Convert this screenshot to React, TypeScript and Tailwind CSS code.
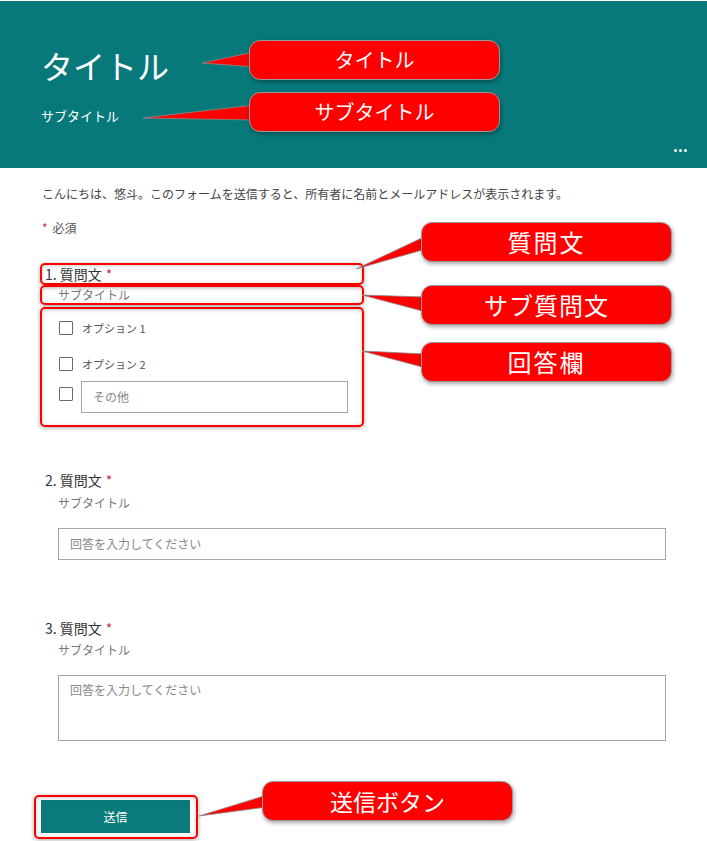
import React from "react";

const JP = "font-['Noto_Sans_CJK_JP',sans-serif]";

type Pointer = { tip: [number, number]; base: [number, number, number] };

const pointers: Pointer[] = [
  { tip: [202, 63], base: [254, 52, 67] },
  { tip: [143, 118], base: [254, 105, 120] },
  { tip: [356, 269], base: [426, 236, 249] },
  { tip: [362, 295], base: [426, 297, 312] },
  { tip: [362, 351], base: [426, 354, 368] },
  { tip: [199, 816], base: [267, 795, 807] },
];

const callouts = [
  { text: "タイトル", cls: "left-[249px] top-[40px] text-[20px]" },
  { text: "サブタイトル", cls: "left-[249px] top-[92px] text-[20px]" },
  { text: "質問文", cls: "left-[421px] top-[222px] text-[24px] tracking-[2px]" },
  { text: "サブ質問文", cls: "left-[421px] top-[285px] text-[24px] tracking-[1px]" },
  { text: "回答欄", cls: "left-[421px] top-[342px] text-[24px] tracking-[2px]" },
  { text: "送信ボタン", cls: "left-[262px] top-[781px] text-[23px]" },
];

function Mark({ className }: { className: string }) {
  // red annotation frame drawn over a block
  return (
    <div
      className={`pointer-events-none absolute rounded-[5px] border-2 border-[#ff0000] shadow-[0_1px_4px_rgba(0,0,0,0.35),inset_0_1px_4px_rgba(0,0,0,0.2)] ${className}`}
    />
  );
}

function Box() {
  return <span className="h-[14px] w-[14px] shrink-0 rounded-[1px] border border-[#6b6b6b] bg-white" />;
}

function Required() {
  return <span className="ml-[4px] text-[#c4314b]">*</span>;
}

function Question({ n }: { n: number }) {
  return (
    <div className="pl-[3px] text-[14px] leading-[20px] text-[#333]">
      {n}. 質問文
      <Required />
    </div>
  );
}

export default function App() {
  return (
    <div className={`relative h-[841px] w-full overflow-hidden bg-white ${JP}`}>
      <div className="pt-px">
        <header className="flex h-[167px] flex-col bg-[#07797a] pl-[41px] pt-[46px] text-white">
          <h1 className="text-[32px] font-normal leading-[36px]">タイトル</h1>
          <div className="mt-[23px] text-[13px] leading-[20px]">サブタイトル</div>
          <div className="mt-[23px] flex justify-end gap-[2px] pr-[20px]">
            <span className="h-[3px] w-[3px] rounded-full bg-white" />
            <span className="h-[3px] w-[3px] rounded-full bg-white" />
            <span className="h-[3px] w-[3px] rounded-full bg-white" />
          </div>
        </header>
      </div>

      <main className="px-[42px] pt-[17px] text-[#333]">
        <p className="text-[12px] leading-[18px] text-[#444]">
          こんにちは、悠斗。このフォームを送信すると、所有者に名前とメールアドレスが表示されます。
        </p>
        <div className="mt-[16px] text-[12px] leading-[18px] text-[#555]">
          <span className="mr-[5px] text-[#c4314b]">*</span>必須
        </div>

        <div className="relative ml-[-2px] mt-[26px] flex h-[22px] w-[324px] items-center pl-[2px]">
          <Question n={1} />
          <Mark className="inset-0" />
        </div>
        <div className="relative ml-[-2px] flex h-[20px] w-[324px] items-center pl-[18px] text-[12px] text-[#777]">
          サブタイトル
          <Mark className="inset-0" />
        </div>
        <div className="relative ml-[-2px] mt-[2px] h-[120px] w-[324px] pl-[19px] pt-[14px] text-[11px] text-[#555]">
          <div className="flex h-[14px] items-center">
            <Box />
            <span className="ml-[9px]">オプション 1</span>
          </div>
          <div className="mt-[22px] flex h-[14px] items-center">
            <Box />
            <span className="ml-[9px]">オプション 2</span>
          </div>
          <div className="mt-[10px] flex items-start">
            <span className="mt-[6px] flex">
              <Box />
            </span>
            <div className="ml-[8px] flex h-[32px] w-[267px] items-center border border-[#a6a6a6] pl-[11px] text-[12px] text-[#888]">
              その他
            </div>
          </div>
          <Mark className="inset-0" />
        </div>

        <div className="mt-[43px]">
          <Question n={2} />
        </div>
        <div className="mt-[4px] pl-[16px] text-[12px] leading-[18px] text-[#777]">サブタイトル</div>
        <div className="ml-[16px] mt-[16px] flex h-[32px] w-[608px] items-center border border-[#a6a6a6] pl-[11px] text-[12px] text-[#888]">
          回答を入力してください
        </div>

        <div className="mt-[58px]">
          <Question n={3} />
        </div>
        <div className="mt-[3px] pl-[16px] text-[12px] leading-[18px] text-[#777]">サブタイトル</div>
        <div className="ml-[16px] mt-[16px] h-[66px] w-[608px] border border-[#a6a6a6] pl-[11px] pt-[5px] text-[12px] leading-[18px] text-[#888]">
          回答を入力してください
        </div>

        <div className="relative ml-[-1px] mt-[59px] w-[149px]">
          <button className="flex h-[33px] w-[149px] items-center justify-center bg-[#0b7a7a] text-[12px] text-white">
            送信
          </button>
          <Mark className="-bottom-[6px] -left-[7px] -right-[8px] -top-[5px]" />
        </div>
      </main>

      <svg className="pointer-events-none absolute left-0 top-0" width="707" height="841" aria-hidden="true">
        {pointers.map((p, i) => (
          <polygon
            key={i}
            points={`${p.tip[0]},${p.tip[1]} ${p.base[0]},${p.base[1]} ${p.base[0]},${p.base[2]}`}
            fill="#ff0000"
            stroke="#8a8a8a"
            strokeWidth="0.8"
            strokeLinejoin="round"
          />
        ))}
      </svg>

      {callouts.map((c) => (
        <div
          key={c.text}
          className={`absolute flex h-[40px] w-[251px] items-center justify-center rounded-[11px] border border-[#9a9a9a] bg-[#ff0000] leading-none text-white shadow-[1px_2px_4px_rgba(0,0,0,0.35)] ${c.cls}`}
        >
          {c.text}
        </div>
      ))}
    </div>
  );
}
